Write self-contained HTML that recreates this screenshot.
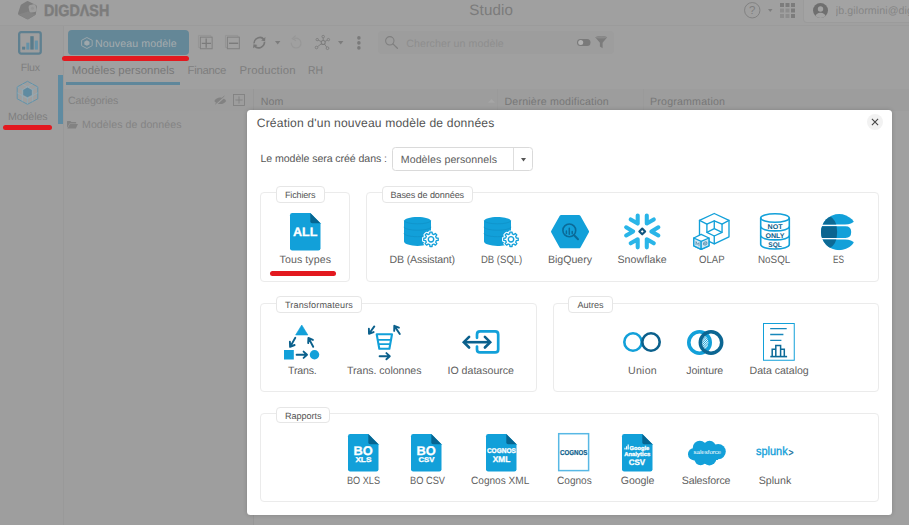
<!DOCTYPE html>
<html lang="fr"><head><meta charset="utf-8"><title>Studio</title>
<style>
html,body{margin:0;padding:0}
html{overflow:hidden;width:909px;height:525px}
body{width:909px;height:525px;overflow:hidden;background:#a0a0a0;position:relative;font-family:"Liberation Sans",sans-serif;text-rendering:geometricPrecision}
.t{position:absolute;white-space:pre;margin:0;padding:0}
.a{position:absolute}
svg{position:absolute;overflow:visible}
svg text{font-family:"Liberation Sans",sans-serif}
.fs{position:absolute;border:1px solid #ebebeb;border-radius:4px;box-sizing:border-box}
.lg{position:absolute;border:1px solid #e6e6e6;border-radius:4px;background:#fff;box-sizing:border-box}
.red{position:absolute;height:5px;border-radius:3px;background:#e3191f}
</style></head><body>

<!-- ===== header ===== -->
<div class="a" style="left:0;top:0;width:909px;height:25px;background:#a0a0a0;border-bottom:1px solid #9b9b9b"></div>
<div class="a" style="left:802.5px;top:-1px;width:106.5px;height:21.5px;background:#a3a3a3;border:1px solid #9b9b9b;border-right:0;border-radius:0 0 0 4px;box-sizing:content-box"></div>
<!-- logo cube -->
<svg style="left:18px;top:1px" width="19.5" height="18.5" viewBox="0 0 19.5 18.5">
<path d="M8.4 0.4Q9.6 -0.2 10.8 0.4L17.9 4Q19 4.6 18.8 5.8L17.9 12.8Q17.8 13.8 16.9 14.3L10.6 18Q9.7 18.6 8.7 18L0.8 13.9Q-0.3 13.3 0.1 12.1L2.6 4.6Q2.9 3.7 3.7 3.2Z" fill="#7d7d7d"/>
<path d="M0.5 13.4L9.7 10.6L17.7 13.6L10.6 18Q9.7 18.6 8.7 18Z" fill="#848484"/>
<rect x="10.9" y="3.6" width="7.3" height="7.7" rx="1.9" fill="#9d9d9d" transform="rotate(-10 14.5 7.5)"/>
<circle cx="14.4" cy="7.3" r="1.5" fill="#959595"/>
</svg>
<!-- help -->
<svg style="left:744px;top:2px" width="16.5" height="16.5" viewBox="0 0 16.5 16.5">
<circle cx="8.25" cy="8.25" r="7.7" fill="none" stroke="#808080" stroke-width="0.95"/>
<text x="8.25" y="12.3" font-size="11.5" fill="#7e7e7e" text-anchor="middle">?</text>
</svg>
<svg style="left:767.5px;top:9px" width="4.5" height="3" viewBox="0 0 4.5 3"><path d="M0 0H4.5L2.25 3Z" fill="#7e7e7e"/></svg>
<!-- grid -->
<svg style="left:779.5px;top:3px" width="15" height="15" viewBox="0 0 15 15">
<g fill="#8d8d8d"><rect x="0" y="5.5" width="4" height="4"/><rect x="5.5" y="5.5" width="4" height="4"/><rect x="0" y="11" width="4" height="4"/><rect x="5.5" y="11" width="4" height="4"/></g>
<g fill="#7c7c7c"><rect x="0" y="0" width="4" height="4"/><rect x="5.5" y="0" width="4" height="4"/><rect x="11" y="0" width="4" height="4"/><rect x="11" y="5.5" width="4" height="4"/><rect x="11" y="11" width="4" height="4"/></g>
</svg>
<!-- avatar -->
<svg style="left:812.75px;top:3px" width="15" height="15" viewBox="0 0 15 15">
<defs><clipPath id="avc"><circle cx="7.5" cy="7.5" r="7.5"/></clipPath></defs>
<circle cx="7.5" cy="7.5" r="7.5" fill="#6f6f6f"/>
<g clip-path="url(#avc)" fill="#a3a3a3"><circle cx="7.5" cy="6" r="2.7"/><ellipse cx="7.5" cy="13.6" rx="5.2" ry="3.8"/></g>
</svg>


<!-- ===== sidebar ===== -->
<div class="a" style="left:0;top:26px;width:63px;height:499px;background:#9e9e9e"></div>
<div class="a" style="left:64px;top:111px;width:189px;height:414px;background:#9e9e9e"></div>
<div class="a" style="left:63px;top:26px;width:1px;height:499px;background:#999"></div>
<div class="a" style="left:58px;top:75px;width:5.2px;height:48.5px;background:#5f8ba1"></div>
<!-- flux -->
<svg style="left:18px;top:31.3px" width="24" height="23.7" viewBox="0 0 24 23.7">
<rect x="1.15" y="1.15" width="21.6" height="21.4" rx="2" fill="none" stroke="#5f8090" stroke-width="2.3"/>
<rect x="4.1" y="15.7" width="3.1" height="2.9" fill="#5c7e8e"/>
<rect x="8.3" y="11.7" width="3.1" height="6.9" fill="#6592a8"/>
<rect x="12.3" y="5.2" width="3.4" height="13.4" fill="#587b8b"/>
<rect x="16.7" y="9.6" width="3.2" height="9" fill="#6592a8"/>
</svg>
<!-- modeles -->
<svg style="left:17px;top:80.5px" width="21.5" height="23.5" viewBox="0 0 21.5 23.5">
<g fill="none" stroke="#6293aa" stroke-width="1" stroke-linejoin="round">
<path d="M10.5 0.3L20.8 5.9V17.8L10.5 23.3L0.2 17.8V5.9Z"/>
<path d="M0.2 5.9L10.5 11.6L20.8 5.9M10.5 11.6V23.3" stroke="#86a9ba" stroke-width="0.7"/>
<path d="M5.3 3.1L15.7 8.8V20.6M15.7 3.1L5.3 8.8V20.6M0.2 11.8L10.5 17.5L20.8 11.8" stroke="#8fb0bf" stroke-width="0.6"/>
</g>
<path d="M10.5 6.6L14.8 8.9V13.9L10.5 16.2L6.2 13.9V8.9Z" fill="#5f8ba1"/>
</svg>

<div class="red" style="left:3px;top:124.5px;width:48.75px"></div>

<!-- ===== toolbar ===== -->
<div class="a" style="left:68px;top:30px;width:121.25px;height:25px;border-radius:4px;background:#648797"></div>
<div class="red" style="left:62px;top:55.5px;width:127.25px"></div>
<div class="a" style="left:377.5px;top:30.6px;width:236.3px;height:23.8px;border-radius:4px;background:#9d9d9d"></div>
<!-- button icon -->
<svg style="left:80.75px;top:37px" width="11.75" height="12" viewBox="0 0 11.75 12">
<path d="M5.9 0.5L11.2 3.3V8.7L5.9 11.5L0.6 8.7V3.3Z" fill="none" stroke="#9fa8ac" stroke-width="0.9" stroke-linejoin="round"/>
<path d="M5.9 3.3L8.5 4.7V7.4L5.9 8.8L3.3 7.4V4.7Z" fill="#9fa8ac"/>
</svg>
<!-- expand all -->
<svg style="left:198.3px;top:35.3px" width="14.6" height="14.2" viewBox="0 0 14.6 14.2">
<g fill="none" stroke="#808080" stroke-width="1">
<path d="M1.9 12.5H0.45V0.45H12.8V1.7" stroke="#939393" stroke-width="0.8"/>
<rect x="2.35" y="2.15" width="11.8" height="11.6"/>
<path d="M8.2 3.5V12.8M3.8 8.3H13" stroke="#7b7b7b" stroke-width="1.3"/>
</g></svg>
<!-- collapse all -->
<svg style="left:225px;top:35.3px" width="14.8" height="14.2" viewBox="0 0 14.8 14.2">
<g fill="none" stroke="#808080" stroke-width="1">
<path d="M1.9 12.5H0.45V0.45H12.8V1.7" stroke="#939393" stroke-width="0.8"/>
<rect x="2.35" y="2.15" width="12" height="11.6"/>
<path d="M4 8.3H13.2" stroke="#7b7b7b" stroke-width="1.4"/>
</g></svg>
<!-- refresh -->
<svg style="left:252px;top:35.7px" width="14.6" height="13.4" viewBox="0 0 14.6 13.4">
<g transform="skewX(-8) translate(0.9 0)">
<path d="M2.15 7.42A5.2 5.2 0 0 1 11.16 3.22" fill="none" stroke="#787878" stroke-width="1.7"/>
<path d="M12.45 5.98A5.2 5.2 0 0 1 3.44 10.18" fill="none" stroke="#787878" stroke-width="1.7"/>
<path d="M12.90 5.15L12.70 1.03L8.83 4.51ZM1.70 8.25L1.90 12.37L5.77 8.89Z" fill="#787878"/>
</g></svg>
<svg style="left:274.5px;top:40.9px" width="5.4" height="3.5" viewBox="0 0 5.4 3.5"><path d="M0 0H5.4L2.7 3.5Z" fill="#7c7c7c"/></svg>
<!-- undo (disabled) -->
<svg style="left:289.7px;top:36.4px" width="11.6" height="12.6" viewBox="0 0 11.6 12.6">
<path d="M4.83 2.37A4.9 4.9 0 1 1 1.20 7.10" fill="none" stroke="#979797" stroke-width="1.15" stroke-linecap="round"/>
<path d="M5.23 -0.03L2.23 2.57L5.63 4.57" fill="none" stroke="#979797" stroke-width="1.15" stroke-linecap="round" stroke-linejoin="round"/>
</svg>
<!-- graph -->
<svg style="left:315px;top:35px" width="15" height="15" viewBox="0 0 15 15">
<g fill="none" stroke="#7d7d7d" stroke-width="0.9">
<path d="M8.2 7.5L8.2 2.6M8.2 7.5L12.5 5.1M8.2 7.5L11.9 12.3M8.2 7.5L2.2 11.9M8.2 7.5L3 5"/>
<circle cx="8.2" cy="1.6" r="1.25" fill="#a0a0a0"/><circle cx="13.4" cy="4.6" r="1.2" fill="#a0a0a0"/><circle cx="12.5" cy="13.2" r="1.35" fill="#a0a0a0"/><circle cx="1.5" cy="12.5" r="1.3" fill="#a0a0a0"/><circle cx="2.2" cy="4.6" r="1.2" fill="#a0a0a0"/>
<circle cx="8.2" cy="7.5" r="2" fill="#a0a0a0" stroke-width="1.1"/>
</g></svg>
<svg style="left:337.6px;top:40.9px" width="5.4" height="3.5" viewBox="0 0 5.4 3.5"><path d="M0 0H5.4L2.7 3.5Z" fill="#7c7c7c"/></svg>
<!-- dots -->
<svg style="left:357px;top:35.75px" width="3.8" height="13.8" viewBox="0 0 3.8 13.8"><g fill="#7a7a7a"><circle cx="1.9" cy="1.9" r="1.8"/><circle cx="1.9" cy="6.9" r="1.8"/><circle cx="1.9" cy="11.9" r="1.8"/></g></svg>
<!-- search -->
<svg style="left:384.5px;top:36px" width="13" height="12.75" viewBox="0 0 13 12.75">
<circle cx="4.8" cy="4.8" r="4.2" fill="none" stroke="#7f7f7f" stroke-width="1.05"/>
<path d="M7.9 7.9L12.4 12.2" stroke="#7f7f7f" stroke-width="1.3" stroke-linecap="round"/>
</svg>
<!-- toggle -->
<svg style="left:577px;top:39.25px" width="13.5" height="7" viewBox="0 0 13.5 7">
<rect x="0" y="0" width="13.5" height="7" rx="3.5" fill="#7a7a7a"/><circle cx="3.7" cy="3.5" r="2.5" fill="#b2b2b2"/>
</svg>
<!-- funnel -->
<svg style="left:594.5px;top:35.75px" width="12.5" height="13" viewBox="0 0 12.5 13">
<path d="M0.3 1.2Q6.25 -1 12.2 1.2L7.6 6.8V12.2L4.9 10.6V6.8Z" fill="#7b7b7b"/>
<ellipse cx="6.25" cy="1.3" rx="5.9" ry="1.2" fill="#8a8a8a"/>
</svg>

<div class="a" style="left:66.25px;top:82px;width:113.75px;height:3px;background:#5f879b"></div>

<!-- ===== table header ===== -->
<div class="a" style="left:64px;top:89px;width:845px;height:22px;background:#9d9d9d"></div>
<div class="a" style="left:253px;top:89px;width:1px;height:436px;background:#979797"></div>
<div class="a" style="left:497px;top:89px;width:1px;height:22px;background:#9a9a9a"></div>
<div class="a" style="left:643px;top:89px;width:1px;height:22px;background:#9a9a9a"></div>
<!-- eye slash -->
<svg style="left:213.75px;top:96.25px" width="12.5" height="9" viewBox="0 0 12.5 9">
<path d="M0.3 4.9Q2.2 1.4 6.2 1.4Q10.2 1.4 12.2 4.9Q10.2 8 6.2 8Q2.2 8 0.3 4.9Z" fill="#828282"/>
<path d="M1.8 8.6L11 0.4" stroke="#9d9d9d" stroke-width="1.6"/>
<path d="M1.2 8.2L10.4 0" stroke="#828282" stroke-width="0.9"/>
</svg>
<!-- plus box -->
<svg style="left:233.25px;top:94.25px" width="12" height="12" viewBox="0 0 12 12">
<rect x="0.5" y="0.5" width="11" height="11" fill="none" stroke="#828282" stroke-width="0.9"/>
<path d="M6 2.4V9.6M2.4 6H9.6" stroke="#828282" stroke-width="0.9"/>
</svg>
<!-- sort arrow -->
<svg style="left:487.5px;top:98.75px" width="7" height="3.75" viewBox="0 0 7 3.75"><path d="M0 3.75L3.5 0L7 3.75Z" fill="#a6a6a6"/></svg>
<!-- folder -->
<svg style="left:67px;top:121px" width="11" height="7.5" viewBox="0 0 11 7.5">
<path d="M0 0.6Q0 0 0.6 0H3.4L4.4 1H8.6Q9.2 1 9.2 1.6V2.4H2.6L0 7Z" fill="#828282"/>
<path d="M2.9 3H11L8.8 7.5H0.4Z" fill="#828282"/>
</svg>


<!-- ===== dialog ===== -->
<div class="a" style="left:247px;top:110px;width:645.2px;height:405.4px;background:#fff;border-radius:3.5px;box-shadow:0 0 4px rgba(0,0,0,.18)"></div>
<div class="a" style="left:867px;top:114px;width:16px;height:16px;border-radius:8px;background:#f2f2f2"></div>
<svg style="left:867px;top:114px" width="16" height="16" viewBox="0 0 16 16"><path d="M4.9 4.9 L11.1 11.1 M11.1 4.9 L4.9 11.1" stroke="#444" stroke-width="1.1" fill="none"/></svg>

<div class="a" style="left:392px;top:147px;width:141px;height:24px;border:1px solid #dadada;border-radius:3.5px;box-sizing:border-box;background:#fff"></div>
<div class="a" style="left:513px;top:148px;width:1px;height:22px;background:#dedede"></div>
<svg style="left:520.5px;top:157.5px" width="5" height="3.5" viewBox="0 0 5 3.5"><path d="M0 0H5L2.5 3.5Z" fill="#555"/></svg>

<div class="fs" style="left:260px;top:192px;width:90px;height:90px"></div>
<div class="fs" style="left:366px;top:192px;width:513px;height:90px"></div>
<div class="fs" style="left:260px;top:303px;width:277px;height:89px"></div>
<div class="fs" style="left:552.5px;top:303px;width:326.5px;height:89px"></div>
<div class="fs" style="left:260px;top:413px;width:619px;height:89px"></div>
<div class="lg" style="left:276px;top:186px;width:49px;height:17px"></div>
<div class="lg" style="left:381.5px;top:186px;width:91.5px;height:17px"></div>
<div class="lg" style="left:276px;top:296px;width:86px;height:17px"></div>
<div class="lg" style="left:568px;top:296px;width:45px;height:17px"></div>
<div class="lg" style="left:276px;top:407px;width:54px;height:16px"></div>
<div class="red" style="left:270px;top:271px;width:66px"></div>

<!-- file icons: symbol -->
<svg width="0" height="0" style="left:0;top:0"><defs>
<symbol id="fileic" viewBox="0 0 30.5 37.5" overflow="visible">
<path d="M2.2 0H20.3L30.5 10.2V35.3Q30.5 37.5 28.3 37.5H2.2Q0 37.5 0 35.3V2.2Q0 0 2.2 0Z" fill="#12a0d9"/>
<path d="M20.3 0L30.5 10.2H22.2Q20.3 10.2 20.3 8.3Z" fill="#066591"/>
</symbol>
<symbol id="dbic" viewBox="0 0 38 32" overflow="visible">
<path d="M0 4.2V24.6C0 27 6.2 28.9 13.5 28.9S27 27 27 24.6V4.2C27 1.9 20.8 0 13.5 0S0 1.9 0 4.2Z" fill="#12a0d9"/>
<path d="M0.3 3.6C0.3 5.36 6.2 6.8 13.5 6.8S26.7 5.36 26.7 3.6M0 9.9C0 11.71 6.2 13.2 13.5 13.2S27 11.71 27 9.9M0 16.4C0 18.21 6.2 19.7 13.5 19.7S27 18.21 27 16.4" fill="none" stroke="#0e8fc6" stroke-width="0.7"/>
<g transform="translate(27 22.3)">
<path d="M-1.28 -5.35L-1.09 -7.22L1.09 -7.22L1.28 -5.35L2.87 -4.69L4.34 -5.87L5.87 -4.34L4.69 -2.87L5.35 -1.28L7.22 -1.09L7.22 1.09L5.35 1.28L4.69 2.87L5.87 4.34L4.34 5.87L2.87 4.69L1.28 5.35L1.09 7.22L-1.09 7.22L-1.28 5.35L-2.87 4.69L-4.34 5.87L-5.87 4.34L-4.69 2.87L-5.35 1.28L-7.22 1.09L-7.22 -1.09L-5.35 -1.28L-4.69 -2.87L-5.87 -4.34L-4.34 -5.87L-2.87 -4.69Z" fill="#fff" stroke="#fff" stroke-width="3.4" stroke-linejoin="round"/>
<path d="M-1.28 -5.35L-1.09 -7.22L1.09 -7.22L1.28 -5.35L2.87 -4.69L4.34 -5.87L5.87 -4.34L4.69 -2.87L5.35 -1.28L7.22 -1.09L7.22 1.09L5.35 1.28L4.69 2.87L5.87 4.34L4.34 5.87L2.87 4.69L1.28 5.35L1.09 7.22L-1.09 7.22L-1.28 5.35L-2.87 4.69L-4.34 5.87L-5.87 4.34L-4.69 2.87L-5.35 1.28L-7.22 1.09L-7.22 -1.09L-5.35 -1.28L-4.69 -2.87L-5.87 -4.34L-4.34 -5.87L-2.87 -4.69Z" fill="#fff" stroke="#12a0d9" stroke-width="1.3" stroke-linejoin="round"/>
<circle cx="0" cy="0" r="2.7" fill="#fff" stroke="#12a0d9" stroke-width="1.4"/>
</g>
</symbol>
</defs></svg>

<!-- row 1 -->
<svg style="left:290px;top:213px" width="30.5" height="37.5"><use href="#fileic"/>
<text x="15.2" y="23.2" font-size="12.3" font-weight="700" fill="#fff" stroke="#fff" stroke-width="0.3" text-anchor="middle" textLength="24.5" lengthAdjust="spacingAndGlyphs">ALL</text></svg>

<svg style="left:404.2px;top:216.7px" width="38" height="32"><use href="#dbic"/></svg>
<svg style="left:483.7px;top:216.7px" width="38" height="32"><use href="#dbic"/></svg>

<!-- BigQuery -->
<svg style="left:551px;top:215px" width="38.5" height="33.5" viewBox="0 0 38.5 33.5">
<path d="M8.6 0.9Q9.2 0 10.3 0H27.8Q28.9 0 29.5 0.9L37.8 15.7Q38.4 16.65 37.8 17.6L29.5 32.4Q28.9 33.3 27.8 33.3H10.3Q9.2 33.3 8.6 32.4L0.3 17.6Q-0.3 16.65 0.3 15.7Z" fill="#12a0d9"/>
<circle cx="18.3" cy="15.4" r="6.4" fill="none" stroke="#0b6a98" stroke-width="1.6"/>
<path d="M23.1 20.3L27 24.2" stroke="#0b6a98" stroke-width="2" stroke-linecap="round"/>
<path d="M15.4 16.1V18.4M18.3 13.2V19.2M21.2 16.6V18.4" stroke="#0b6a98" stroke-width="1.5" stroke-linecap="round"/>
</svg>

<!-- Snowflake -->
<svg style="left:624.05px;top:213.3px" width="36.5" height="36.75" viewBox="-18.25 -18.4 36.5 36.75">
<g fill="none" stroke="#29b5e8" stroke-width="4.1" stroke-linecap="round" stroke-linejoin="round">
<g id="sfarm"><path d="M16.1 -4.05L9.1 0L16.1 4.05"/></g>
<use href="#sfarm" transform="rotate(60)"/><use href="#sfarm" transform="rotate(120)"/><use href="#sfarm" transform="rotate(180)"/><use href="#sfarm" transform="rotate(240)"/><use href="#sfarm" transform="rotate(300)"/>
</g>
<path d="M0 -2.9L2.9 0L0 2.9L-2.9 0Z" fill="#fff" stroke="#11567f" stroke-width="2.1" stroke-linejoin="round"/>
</svg>

<!-- OLAP -->
<svg style="left:692.5px;top:213.25px" width="37.5" height="36.75" viewBox="0 0 37.5 36.75">
<g fill="none" stroke="#12a0d9" stroke-width="1.35" stroke-linejoin="round" stroke-linecap="round">
<path d="M21.27 0.5L36 7.4V23.8L21.27 30.8L6.5 23.8V7.4Z"/>
<path d="M6.5 7.4L13.9 11.1M36 7.4L29.05 11.1M21.27 23V30.8"/>
<path d="M13.9 11.1L21.27 7.8L29.05 11.1V19.3L21.27 23L13.9 19.3Z"/>
<path d="M21.27 7.8V15.6L13.9 19.3M21.27 15.6L29.05 19.3"/>
</g>
<g stroke="#12a0d9" stroke-width="1.35" stroke-linejoin="round">
<path d="M8.16 21.3L15.95 25V32.8L8.16 36.4L0.8 32.8V25Z" fill="#fff"/>
<path d="M0.8 25L8.16 28.3V36.4L0.8 32.8Z" fill="#cfe7f5"/>
<path d="M15.95 25L8.16 28.3V36.4L15.95 32.8Z" fill="#cfe7f5"/>
</g>
<g fill="none" stroke="#5f93b0" stroke-width="0.9"><path d="M3 32V28.6L4.6 31.4L6 29.6V33.2"/><ellipse cx="12.2" cy="30.4" rx="1.9" ry="1.5" transform="rotate(-25 12.2 30.4)"/><path d="M11 31L13.6 29.6"/></g>
</svg>

<!-- NoSQL -->
<svg style="left:759.5px;top:213.25px" width="30" height="36.75" viewBox="0 0 30 36.75">
<g fill="none" stroke="#12a0d9" stroke-width="1.6">
<ellipse cx="15" cy="5" rx="14.3" ry="4.3"/>
<path d="M0.7 5V31.6C0.7 34 7 36 15 36S29.3 34 29.3 31.6V5"/>
<path d="M0.7 13.6C0.7 16 7 17.9 15 17.9S29.3 16 29.3 13.6M0.7 22.6C0.7 25 7 26.9 15 26.9S29.3 25 29.3 22.6"/>
</g>
<g font-size="6.8" font-weight="700" fill="#0b608c" text-anchor="middle">
<text x="15" y="16.2" textLength="15" lengthAdjust="spacingAndGlyphs">NOT</text>
<text x="15" y="25" textLength="19" lengthAdjust="spacingAndGlyphs">ONLY</text>
<text x="15" y="33.8" textLength="13.5" lengthAdjust="spacingAndGlyphs">SQL</text>
</g>
</svg>

<!-- ES -->
<svg style="left:820.75px;top:213.75px" width="33.75" height="36.25" viewBox="0 0 33.75 36.25">
<defs><clipPath id="esclip"><circle cx="18.1" cy="18.1" r="18.1"/></clipPath></defs>
<g clip-path="url(#esclip)">
<path d="M0 0H33.75V6.5Q31 10.6 24 10.6H0Z" fill="#12a0d9"/>
<path d="M0 36.25H33.75V29.8Q31 25.6 24 25.6H0Z" fill="#12a0d9"/>
<path d="M0 12.2H24.5Q30.2 12.2 30.2 18.1T24.5 24H0Z" fill="#12a0d9"/>
<path d="M0 12.2H15.6Q16.8 18.1 15.6 24H0Z" fill="#0b6590"/>
<path d="M5 0Q13.5 3.5 15.3 10.6H0V0Z" fill="#0d6a95"/>
<path d="M5 36.25Q13.5 32.7 15.3 25.6H0V36.25Z" fill="#0d6a95"/>
</g>
</svg>

<!-- row 2 : Trans -->
<svg style="left:284.25px;top:325px" width="35.25" height="34.5" viewBox="0 0 35.25 34.5">
<path d="M17.75 0L23.9 10H11.6Z" fill="#12a0d9" stroke="#12a0d9" stroke-width="0.6" stroke-linejoin="round"/>
<rect x="0" y="25" width="9.8" height="9.5" fill="#12a0d9"/>
<circle cx="30.5" cy="29.75" r="4.75" fill="#12a0d9"/>
<g fill="none" stroke="#0b608c" stroke-width="1.9" stroke-linecap="round" stroke-linejoin="round">
<path d="M12.6 29.75H22.6M19.6 26.6L23 29.75L19.6 32.9"/>
<path d="M11.3 12.8L6.4 21.4M5.9 16.8L6.1 21.9L10.6 20"/>
<path d="M29.2 21.8L24.7 13.4M24.2 18.1L24.4 13L28.9 14.9"/>
</g>
</svg>

<!-- Trans colonnes -->
<svg style="left:368px;top:325px" width="33" height="33" viewBox="0 0 33 33">
<g fill="none" stroke="#12a0d9" stroke-width="2.1" stroke-linejoin="round">
<path d="M8.7 9.2H24L21.4 23.8H11.3Z"/>
<path d="M9.6 14.8H23.2M10.6 19.2H22.4" stroke-width="1.7"/>
</g>
<g fill="none" stroke="#0b608c" stroke-width="1.9" stroke-linecap="round" stroke-linejoin="round">
<path d="M6.3 1.4L1.4 8.2M0.9 3.8L1 8.8L5.6 7.1"/>
<path d="M31.8 9L26.7 1.4M26.2 5.9L26.3 0.8L30.9 2.7"/>
<path d="M11.6 31.2H21.4M18.4 28.1L21.8 31.2L18.4 34.3"/>
</g>
</svg>

<!-- IO datasource -->
<svg style="left:462px;top:330px" width="38" height="24" viewBox="0 0 38 24">
<path d="M15 7.8V4.4Q15 1.35 18 1.35H33.2Q36.2 1.35 36.2 4.4V19.4Q36.2 22.45 33.2 22.45H18Q15 22.45 15 19.4V16.6" fill="none" stroke="#12a0d9" stroke-width="2.7" stroke-linecap="round"/>
<g fill="none" stroke="#0b608c" stroke-width="2.6" stroke-linecap="butt" stroke-linejoin="miter">
<path d="M2.6 12.2H27.4"/><path d="M7.1 6.9L1.8 12.2L7.1 17.5M22.9 6.9L28.2 12.2L22.9 17.5" stroke-linecap="round"/>
</g>
</svg>

<!-- Union -->
<svg style="left:623px;top:332px" width="38" height="20" viewBox="0 0 38 20">
<circle cx="10" cy="10" r="8.7" fill="none" stroke="#12a0d9" stroke-width="2.6"/>
<circle cx="28" cy="10" r="8.7" fill="none" stroke="#0b608c" stroke-width="2.6"/>
</svg>

<!-- Jointure -->
<svg style="left:686.75px;top:329.5px" width="36.5" height="25" viewBox="0 0 36.5 25">
<defs><clipPath id="lens"><circle cx="12.5" cy="12.5" r="9"/></clipPath>
<pattern id="hatch" width="1.6" height="1.6" patternUnits="userSpaceOnUse" patternTransform="rotate(45)"><rect width="0.8" height="1.6" fill="#12a0d9"/></pattern></defs>
<circle cx="24" cy="12.5" r="9" fill="url(#hatch)" clip-path="url(#lens)"/>
<circle cx="12.5" cy="12.5" r="10.7" fill="none" stroke="#12a0d9" stroke-width="3.6"/>
<circle cx="24" cy="12.5" r="10.7" fill="none" stroke="#0c6692" stroke-width="3.5"/>
<path d="M17.2 3.4A10.7 10.7 0 0 1 17.2 21.6" fill="none" stroke="#12a0d9" stroke-width="0" />
</svg>

<!-- Data catalog -->
<svg style="left:763.25px;top:323px" width="31.75" height="37.75" viewBox="0 0 31.75 37.75">
<rect x="0.5" y="0.5" width="30.75" height="36.75" fill="#fff" stroke="#12a0d9" stroke-width="1"/>
<path d="M7.2 5.6H23.7M7.2 11.5H20.4M7.2 17.4H18.4" stroke="#1787bb" stroke-width="1.3" fill="none"/>
<path d="M9.2 33.2V26.2H12.8M17.6 26.2H21.3V33.2M12.8 33.2V22.6H17.6V33.2" stroke="#0b6a98" stroke-width="1.5" fill="none"/>
<path d="M7.3 33.6H24.1" stroke="#0b6a98" stroke-width="1.6" fill="none"/>
</svg>

<!-- row 3 -->
<svg style="left:348.25px;top:434px" width="30.5" height="37.5"><use href="#fileic"/>
<text x="15.2" y="20.7" font-size="12.5" font-weight="700" fill="#fff" stroke="#fff" stroke-width="0.3" text-anchor="middle" textLength="19.3" lengthAdjust="spacingAndGlyphs">BO</text>
<text x="15.4" y="27.5" font-size="6.9" font-weight="700" fill="#fff" stroke="#fff" stroke-width="0.3" text-anchor="middle" textLength="16" lengthAdjust="spacingAndGlyphs">XLS</text></svg>

<svg style="left:411.25px;top:434px" width="30.5" height="37.5"><use href="#fileic"/>
<text x="15.2" y="20.7" font-size="12.5" font-weight="700" fill="#fff" stroke="#fff" stroke-width="0.3" text-anchor="middle" textLength="19.3" lengthAdjust="spacingAndGlyphs">BO</text>
<text x="15.4" y="27.5" font-size="6.9" font-weight="700" fill="#fff" stroke="#fff" stroke-width="0.3" text-anchor="middle" textLength="16" lengthAdjust="spacingAndGlyphs">CSV</text></svg>

<svg style="left:485.5px;top:434px" width="30.5" height="37.5"><use href="#fileic"/>
<text x="15.4" y="18.8" font-size="6.9" font-weight="700" fill="#fff" stroke="#fff" stroke-width="0.3" text-anchor="middle" textLength="29" lengthAdjust="spacingAndGlyphs">COGNOS</text>
<text x="15.6" y="27.5" font-size="8" font-weight="700" fill="#fff" stroke="#fff" stroke-width="0.3" text-anchor="middle" textLength="17.5" lengthAdjust="spacingAndGlyphs">XML</text></svg>

<svg style="left:558.25px;top:433.25px" width="31.25" height="38.25" viewBox="0 0 31.25 38.25">
<rect x="0.7" y="0.7" width="29.9" height="36.9" fill="#fff" stroke="#58b8e5" stroke-width="1.5"/>
<text x="15.7" y="22.1" font-size="7.2" font-weight="700" fill="#0b608c" stroke="#0b608c" stroke-width="0.2" text-anchor="middle" textLength="27.5" lengthAdjust="spacingAndGlyphs">COGNOS</text></svg>

<svg style="left:622px;top:434px" width="30.5" height="37.5"><use href="#fileic"/>
<path d="M3 15.6V13.8M4.6 15.6V12.2M6.2 15.6V10.6" stroke="#fff" stroke-width="1.15" fill="none"/>
<text x="7.6" y="15.6" font-size="5.6" font-weight="700" fill="#fff" stroke="#fff" stroke-width="0.3" textLength="19.6" lengthAdjust="spacingAndGlyphs">Google</text>
<text x="15.2" y="22.3" font-size="5.6" font-weight="700" fill="#fff" stroke="#fff" stroke-width="0.3" text-anchor="middle" textLength="26" lengthAdjust="spacingAndGlyphs">Analytics</text>
<text x="15" y="31.2" font-size="8" font-weight="700" fill="#fff" stroke="#fff" stroke-width="0.3" text-anchor="middle" textLength="16.3" lengthAdjust="spacingAndGlyphs">CSV</text></svg>

<!-- Salesforce -->
<svg style="left:687.5px;top:439.5px" width="38" height="25.75" viewBox="0 0 38 25.75">
<g fill="#12a0d9">
<circle cx="11.8" cy="7.8" r="7"/><circle cx="21.6" cy="7.2" r="6.4"/><circle cx="30.2" cy="11.6" r="7.6"/>
<circle cx="6.2" cy="14.2" r="6.2"/><circle cx="12.6" cy="19" r="6.2"/><circle cx="21.4" cy="18.4" r="7"/>
<rect x="8" y="6" width="22" height="14"/>
</g>
<text x="19.4" y="13.9" font-size="5.7" fill="#fff" text-anchor="middle" textLength="27.7" lengthAdjust="spacingAndGlyphs">salesforce</text>
</svg>

<!-- Splunk -->
<svg style="left:756.25px;top:440px" width="38" height="20" viewBox="0 0 38 20">
<text x="0" y="14.9" font-size="11.8" font-weight="400" fill="#12a0d9" stroke="#12a0d9" stroke-width="0.35" textLength="31.6" lengthAdjust="spacingAndGlyphs">splunk</text>
<text x="32.6" y="15.6" font-size="10.5" font-weight="400" fill="#0c6a98" stroke="#0c6a98" stroke-width="0.3" textLength="5" lengthAdjust="spacingAndGlyphs">&gt;</text>
</svg>


<div class="t" style="left:43.75px;top:1.00px;font-size:16.25px;line-height:20px;letter-spacing:0.000px;color:#7c7c7c;font-weight:700;-webkit-text-stroke:0.45px #7c7c7c;transform:scaleX(0.8813);transform-origin:0 0;">DIGDΛSH</div>
<div class="t" style="left:469.25px;top:2.00px;font-size:15.16px;line-height:18px;letter-spacing:0.153px;color:#7b7b7b;">Studio</div>
<div class="t" style="left:835.75px;top:5.00px;font-size:10.61px;line-height:13px;letter-spacing:0.105px;color:#858585;width:73.25px;overflow:hidden;">jb.gilormini@dig</div>
<div class="t" style="left:20.75px;top:62.00px;font-size:10.61px;line-height:13px;letter-spacing:-0.265px;color:#7f7f7f;">Flux</div>
<div class="t" style="left:8.00px;top:111.00px;font-size:10.61px;line-height:13px;letter-spacing:-0.100px;color:#7f7f7f;">Modèles</div>
<div class="t" style="left:95.00px;top:38.00px;font-size:10.61px;line-height:13px;letter-spacing:0.118px;color:#a4abae;">Nouveau modèle</div>
<div class="t" style="left:71.75px;top:64.00px;font-size:11.38px;line-height:14px;letter-spacing:0.053px;color:#787878;">Modèles personnels</div>
<div class="t" style="left:187.50px;top:64.00px;font-size:11.38px;line-height:14px;letter-spacing:-0.289px;color:#7e7e7e;">Finance</div>
<div class="t" style="left:239.50px;top:64.00px;font-size:11.38px;line-height:14px;letter-spacing:0.177px;color:#7e7e7e;">Production</div>
<div class="t" style="left:307.50px;top:64.00px;font-size:11.38px;line-height:14px;letter-spacing:0.000px;color:#7e7e7e;transform:scaleX(0.9125);transform-origin:0 0;">RH</div>
<div class="t" style="left:68.00px;top:95.00px;font-size:10.61px;line-height:13px;letter-spacing:-0.118px;color:#828282;">Catégories</div>
<div class="t" style="left:260.75px;top:96.00px;font-size:10.61px;line-height:13px;letter-spacing:0.050px;color:#777777;">Nom</div>
<div class="t" style="left:504.50px;top:96.00px;font-size:10.61px;line-height:13px;letter-spacing:0.200px;color:#777777;">Dernière modification</div>
<div class="t" style="left:650.00px;top:96.00px;font-size:10.61px;line-height:13px;letter-spacing:0.206px;color:#777777;">Programmation</div>
<div class="t" style="left:82.00px;top:119.00px;font-size:10.61px;line-height:13px;letter-spacing:0.059px;color:#848484;">Modèles de données</div>
<div class="t" style="left:406.25px;top:38.00px;font-size:10.61px;line-height:13px;letter-spacing:0.081px;color:#8e8e8e;">Chercher un modèle</div>
<div class="t" style="left:256.75px;top:116.00px;font-size:12.11px;line-height:15px;letter-spacing:0.165px;color:#525252;">Création d'un nouveau modèle de données</div>
<div class="t" style="left:260.50px;top:153.00px;font-size:10.61px;line-height:13px;letter-spacing:-0.083px;color:#575757;">Le modèle sera créé dans :</div>
<div class="t" style="left:400.75px;top:154.00px;font-size:10.61px;line-height:13px;letter-spacing:0.076px;color:#5c5c5c;">Modèles personnels</div>
<div class="t" style="left:285.00px;top:190.00px;font-size:9.11px;line-height:11px;letter-spacing:-0.198px;color:#555555;">Fichiers</div>
<div class="t" style="left:390.50px;top:190.00px;font-size:9.11px;line-height:11px;letter-spacing:-0.114px;color:#555555;">Bases de données</div>
<div class="t" style="left:285.00px;top:300.00px;font-size:9.11px;line-height:11px;letter-spacing:0.108px;color:#555555;">Transformateurs</div>
<div class="t" style="left:577.50px;top:300.00px;font-size:9.11px;line-height:11px;letter-spacing:-0.066px;color:#555555;">Autres</div>
<div class="t" style="left:285.00px;top:411.00px;font-size:9.11px;line-height:11px;letter-spacing:-0.066px;color:#555555;">Rapports</div>
<div class="t" style="left:279.60px;top:254.00px;font-size:10.61px;line-height:13px;letter-spacing:0.076px;color:#5f5f5f;">Tous types</div>
<div class="t" style="left:389.50px;top:254.00px;font-size:10.61px;line-height:13px;letter-spacing:-0.177px;color:#5f5f5f;">DB (Assistant)</div>
<div class="t" style="left:480.75px;top:254.00px;font-size:10.61px;line-height:13px;letter-spacing:0.000px;color:#5f5f5f;transform:scaleX(0.8971);transform-origin:0 0;">DB (SQL)</div>
<div class="t" style="left:548.00px;top:254.00px;font-size:10.61px;line-height:13px;letter-spacing:-0.032px;color:#5f5f5f;">BigQuery</div>
<div class="t" style="left:617.50px;top:254.00px;font-size:10.61px;line-height:13px;letter-spacing:0.037px;color:#5f5f5f;">Snowflake</div>
<div class="t" style="left:698.75px;top:254.00px;font-size:10.61px;line-height:13px;letter-spacing:0.000px;color:#5f5f5f;transform:scaleX(0.9009);transform-origin:0 0;">OLAP</div>
<div class="t" style="left:758.25px;top:254.00px;font-size:10.61px;line-height:13px;letter-spacing:0.000px;color:#5f5f5f;transform:scaleX(0.9269);transform-origin:0 0;">NoSQL</div>
<div class="t" style="left:832.50px;top:254.00px;font-size:10.61px;line-height:13px;letter-spacing:0.000px;color:#5f5f5f;transform:scaleX(0.7772);transform-origin:0 0;">ES</div>
<div class="t" style="left:288.00px;top:365.00px;font-size:10.61px;line-height:13px;letter-spacing:-0.185px;color:#5f5f5f;">Trans.</div>
<div class="t" style="left:347.00px;top:365.00px;font-size:10.61px;line-height:13px;letter-spacing:-0.042px;color:#5f5f5f;">Trans. colonnes</div>
<div class="t" style="left:447.50px;top:365.00px;font-size:10.61px;line-height:13px;letter-spacing:-0.012px;color:#5f5f5f;">IO datasource</div>
<div class="t" style="left:628.00px;top:365.00px;font-size:10.61px;line-height:13px;letter-spacing:0.257px;color:#5f5f5f;">Union</div>
<div class="t" style="left:686.25px;top:365.00px;font-size:10.61px;line-height:13px;letter-spacing:-0.106px;color:#5f5f5f;">Jointure</div>
<div class="t" style="left:749.50px;top:365.00px;font-size:10.61px;line-height:13px;letter-spacing:-0.029px;color:#5f5f5f;">Data catalog</div>
<div class="t" style="left:347.00px;top:475.00px;font-size:10.61px;line-height:13px;letter-spacing:0.000px;color:#5f5f5f;transform:scaleX(0.8610);transform-origin:0 0;">BO XLS</div>
<div class="t" style="left:410.00px;top:475.00px;font-size:10.61px;line-height:13px;letter-spacing:0.000px;color:#5f5f5f;transform:scaleX(0.8730);transform-origin:0 0;">BO CSV</div>
<div class="t" style="left:471.25px;top:475.00px;font-size:10.61px;line-height:13px;letter-spacing:0.000px;color:#5f5f5f;transform:scaleX(0.9498);transform-origin:0 0;">Cognos XML</div>
<div class="t" style="left:557.00px;top:475.00px;font-size:10.61px;line-height:13px;letter-spacing:0.000px;color:#5f5f5f;transform:scaleX(0.9503);transform-origin:0 0;">Cognos</div>
<div class="t" style="left:620.75px;top:475.00px;font-size:10.61px;line-height:13px;letter-spacing:-0.092px;color:#5f5f5f;">Google</div>
<div class="t" style="left:681.75px;top:475.00px;font-size:10.61px;line-height:13px;letter-spacing:-0.153px;color:#5f5f5f;">Salesforce</div>
<div class="t" style="left:758.75px;top:475.00px;font-size:10.61px;line-height:13px;letter-spacing:0.012px;color:#5f5f5f;">Splunk</div>
</body></html>
